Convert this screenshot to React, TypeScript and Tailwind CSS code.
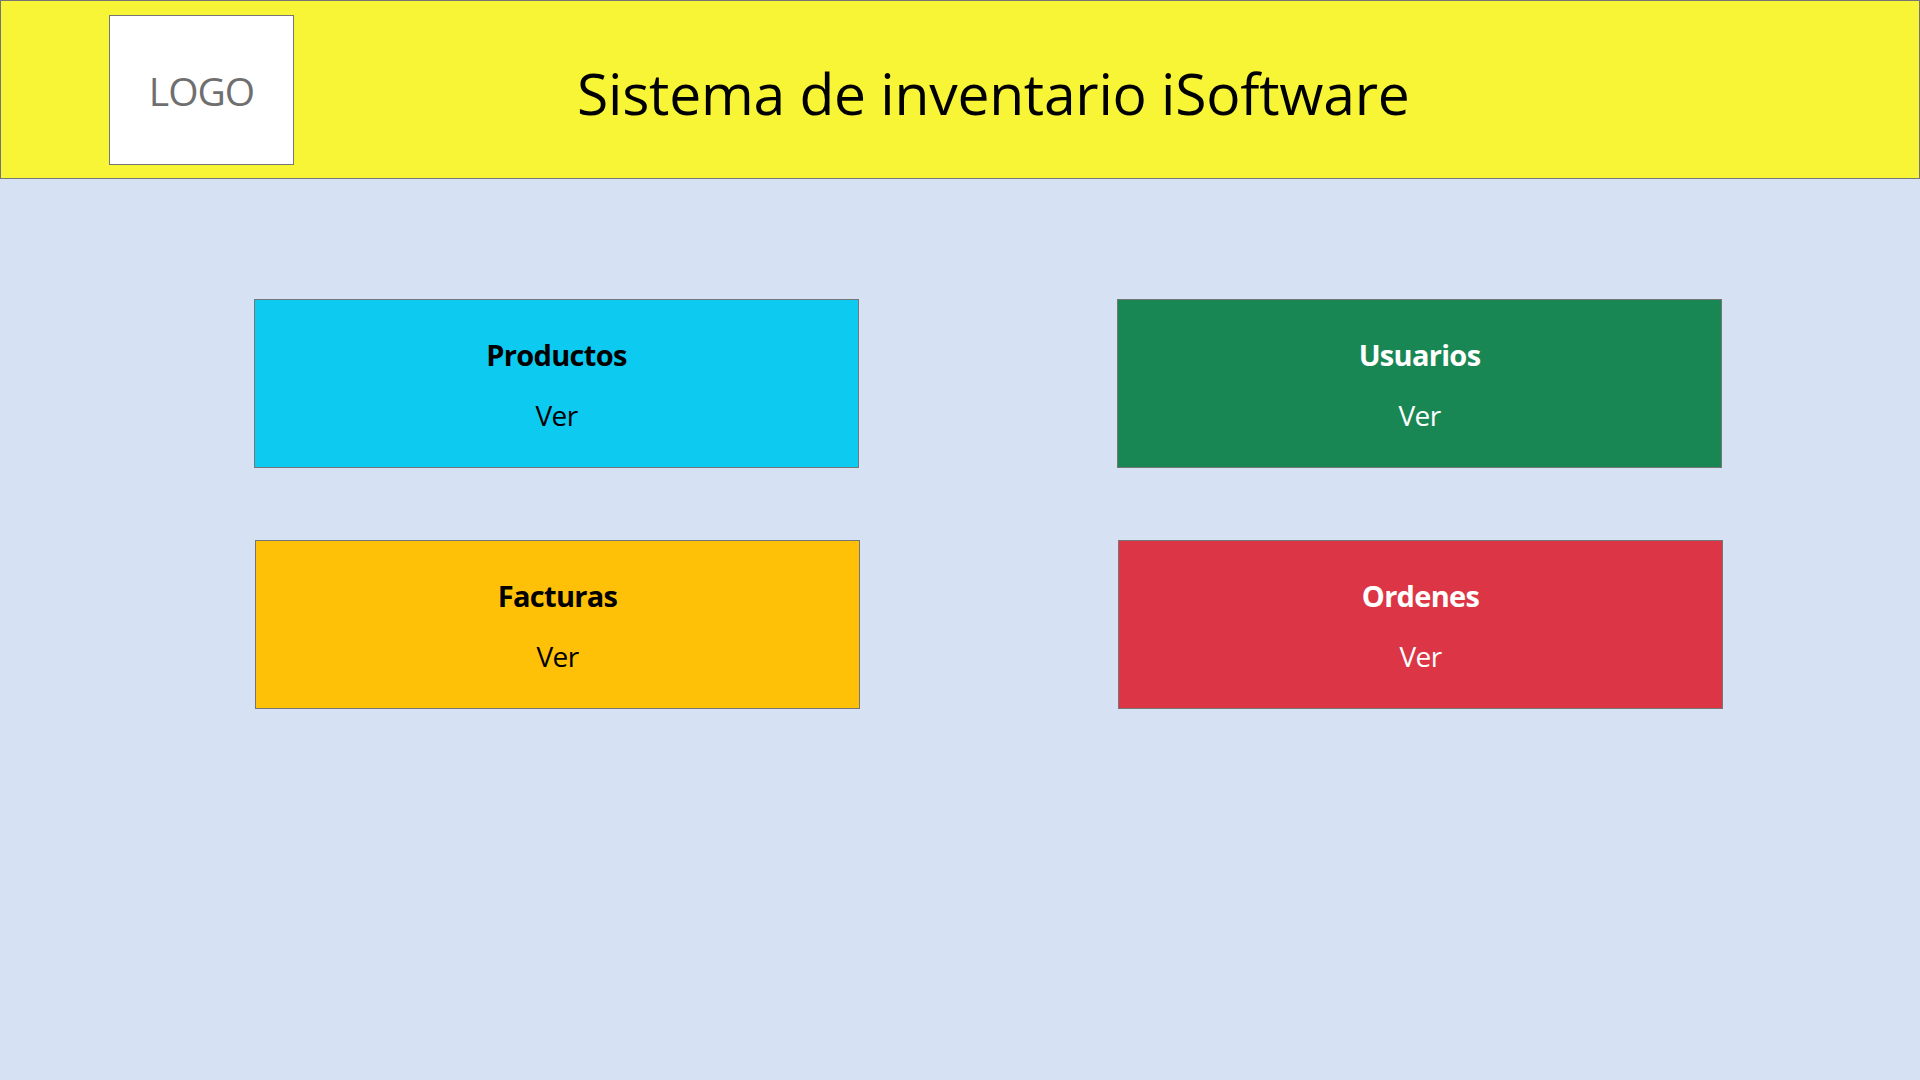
const font = "font-['Open_Sans',sans-serif]";

const Card = ({ title, bg, text }: { title: string; bg: string; text: string }) => {
  return (
    <div className={`flex h-[169px] w-[605px] flex-col items-center border border-[#767676] pt-[36px] ${bg} ${text}`}>
      <span className="text-[29px] leading-[38px] font-bold tracking-[-0.7px]">{title}</span>
      <span className="mt-[22px] text-[28px] leading-[38px] tracking-[-0.6px]">Ver</span>
    </div>
  );
};

export default function App() {
  return (
    <div className={`flex h-[1080px] w-[1920px] flex-col bg-[#d7e1f4] ${font}`}>
      <header className="flex h-[179px] items-start border border-[#767676] bg-[#f8f436] pt-[14px] pl-[108px]">
        <div className="flex h-[150px] w-[185px] items-center justify-center border border-[#767676] bg-white pt-[2px] text-[39px] tracking-[-1px] text-[#6f6f6f]">
          LOGO
        </div>
        <h1 className="mt-[38px] ml-[283px] text-[57px] leading-[80px] tracking-[-0.25px] text-black">
          Sistema de inventario iSoftware
        </h1>
      </header>
      <main className="flex flex-col gap-[72px] pt-[120px]">
        <div className="flex gap-[258px] pl-[254px]">
          <Card title="Productos" bg="bg-[#0dcaf0]" text="text-black" />
          <Card title="Usuarios" bg="bg-[#198754]" text="text-white" />
        </div>
        <div className="flex gap-[258px] pl-[255px]">
          <Card title="Facturas" bg="bg-[#ffc107]" text="text-black" />
          <Card title="Ordenes" bg="bg-[#dc3545]" text="text-white" />
        </div>
      </main>
    </div>
  );
}
